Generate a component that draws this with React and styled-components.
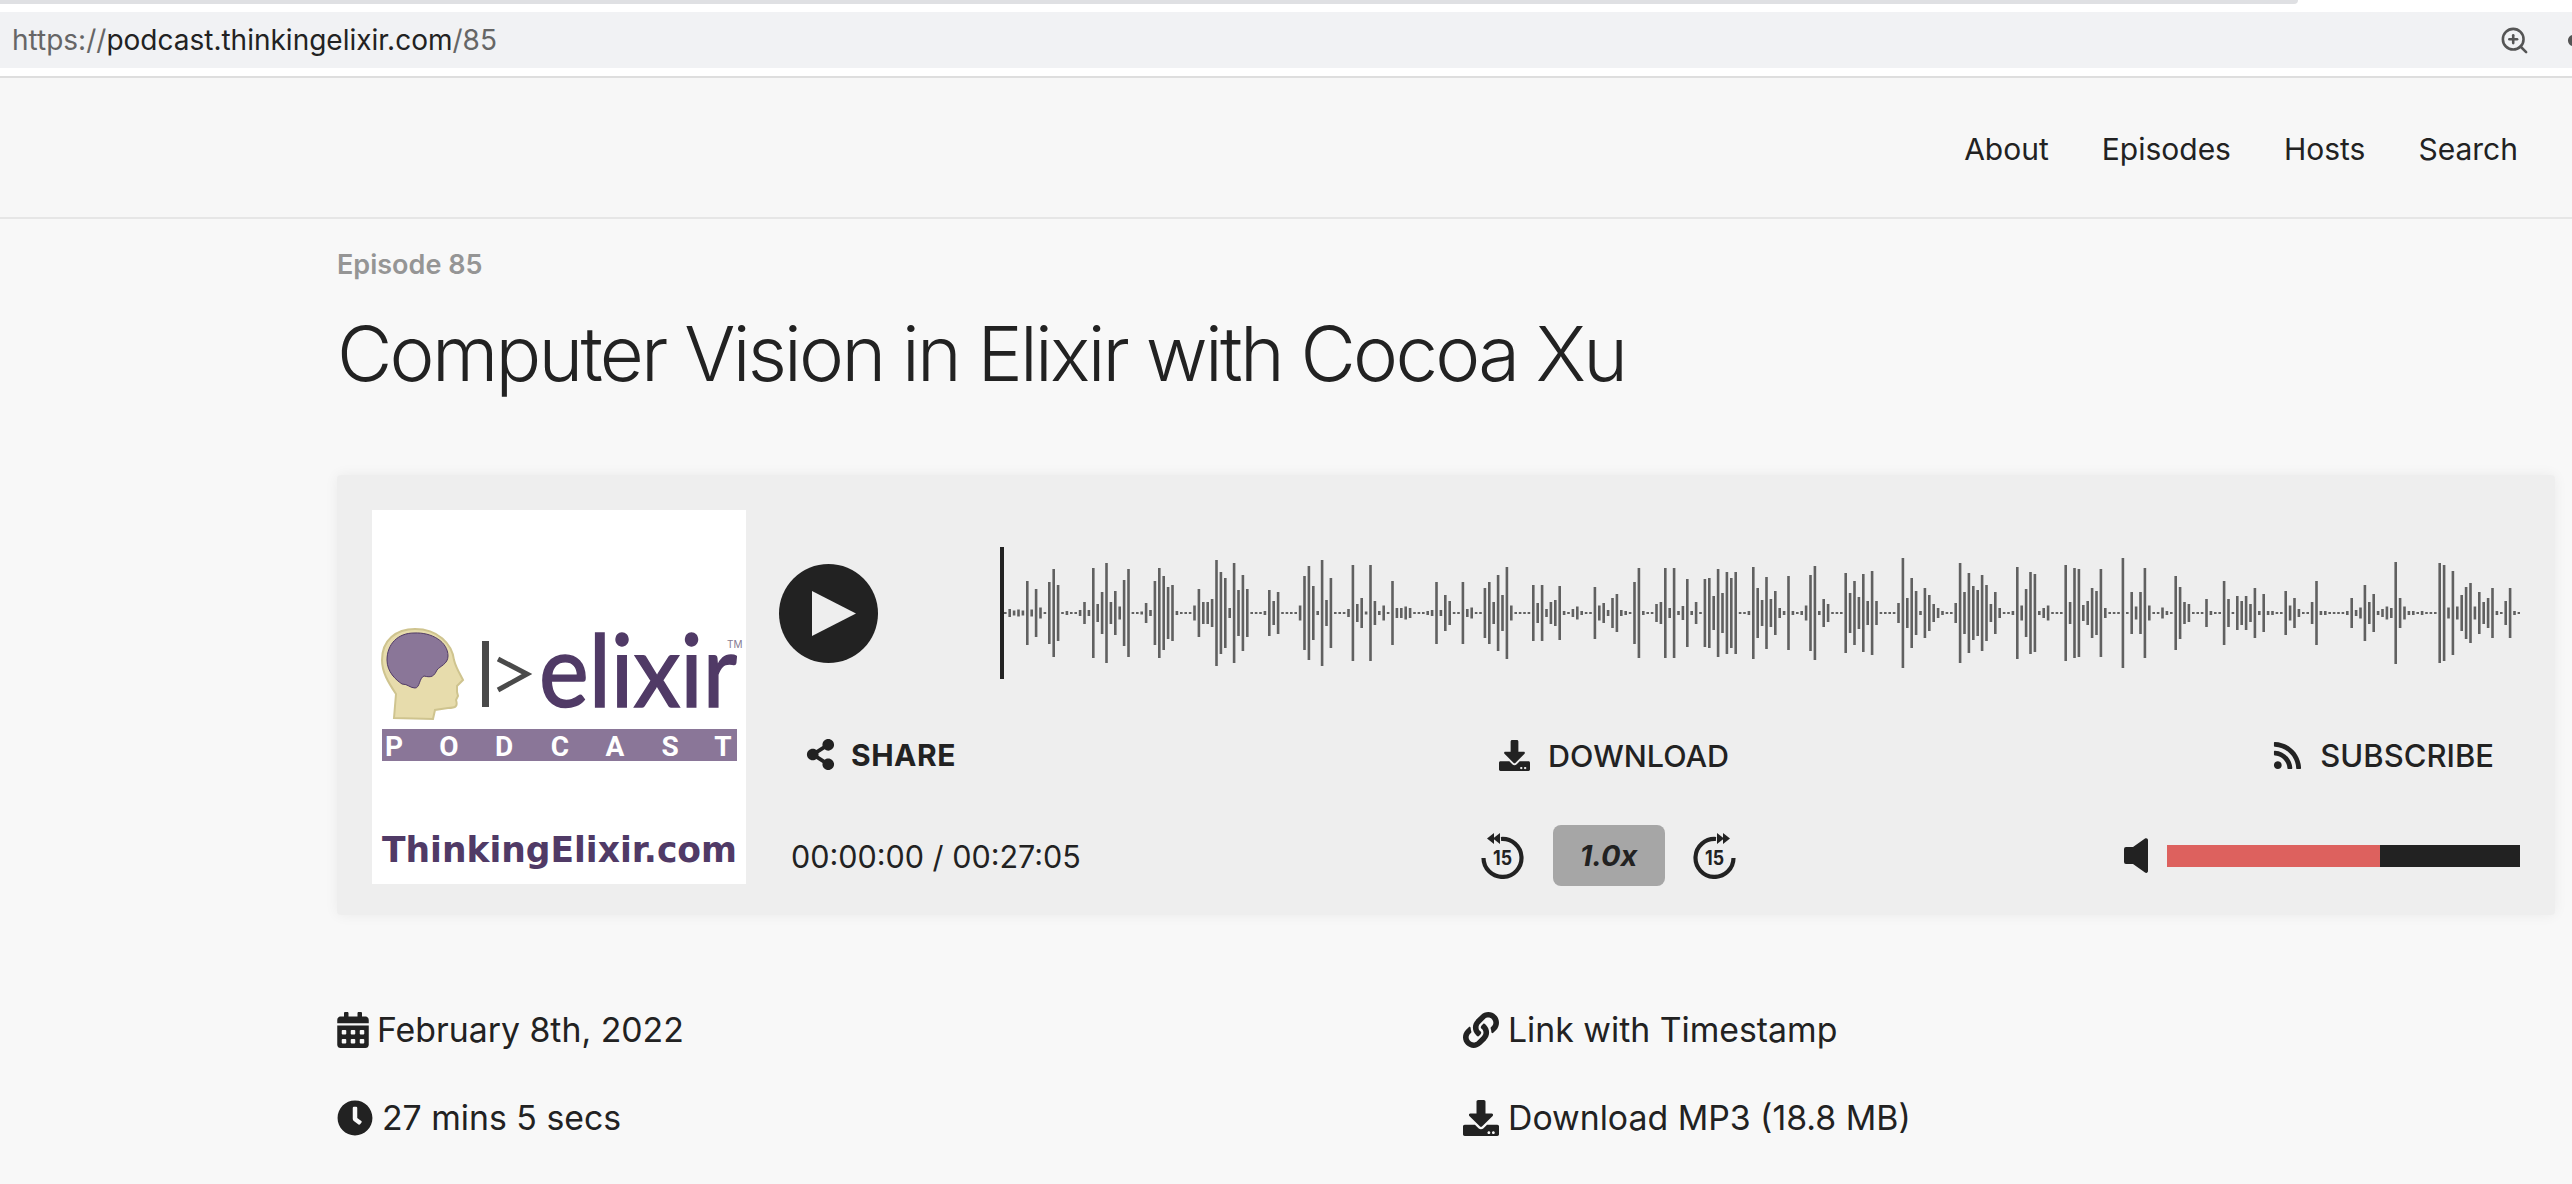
import styled, { createGlobalStyle } from 'styled-components';
import { FaCalendarAlt, FaClock, FaDownload, FaLink, FaRss, FaShareAlt } from 'react-icons/fa';
import { FiZoomIn } from 'react-icons/fi';

// half heights of the wave form bars, left to right, read off the screenshot
const waveBars = [
    1, 4, 2.5, 3.5, 2.5, 32, 3.5, 24, 5.5, 1, 31, 44, 28, 1, 2, 1, 1, 3, 11, 3, 45, 9, 21, 50, 11, 22, 6.5, 33, 44, 1, 1,
    1.5, 10, 3, 32, 45, 37, 26, 28, 2, 1, 1, 1, 7.5, 24, 11, 11, 14, 53, 41, 35, 5, 50, 23, 38, 24, 1, 1, 1, 2, 23, 12,
    21, 1, 1, 1, 1, 7.5, 37, 47, 27, 2, 53, 13, 35, 1, 1, 1, 4, 48, 9,
    15, 1.5, 48, 12, 2, 7.5, 1, 32, 5, 5, 6.5, 5, 1, 1, 1, 2, 3, 31, 3, 18, 12, 1, 1, 31, 4, 5.5, 1, 1, 25, 31, 11, 38,
    18, 46, 7.5, 1, 1, 1, 1, 28, 10, 28, 4, 11, 13, 27, 2, 1, 4, 6.5, 2, 1, 1, 26, 7.5, 10, 3, 15, 19, 3, 2, 1, 31, 45,
    2, 1, 1, 9, 11, 45, 5, 45, 2, 7, 34, 2, 11, 1, 34, 35, 17, 44, 20, 41, 35, 41, 1, 1, 2, 46, 25, 13, 36, 14, 22, 5, 2,
    37, 2, 1, 2, 7.5, 38, 47, 2, 14, 9, 1, 1, 1, 40, 20, 32, 16, 39, 12, 42, 12, 1, 1, 1, 1, 10, 55, 15, 35, 22, 2, 25,
    18, 9, 5, 2, 1, 1, 10, 50,
    21, 40, 27, 23, 38, 28, 9, 21, 5, 1, 1, 2, 46, 7.5, 24, 41, 39, 2, 5, 7.5, 1, 1, 1, 48, 11, 45, 44, 8, 12, 25, 22,
    44, 5, 1, 1, 1, 55, 1, 21, 6.5, 21, 45, 7.5, 1, 1, 5.5, 2, 1, 37, 26, 11, 9, 1, 1, 1, 14, 2, 1, 1, 32, 14, 1, 17, 12,
    17, 9, 25, 2, 19, 2, 2, 1, 1, 22, 7.5, 15, 4, 1, 1, 11, 32, 2, 2, 1, 1, 1, 1, 2, 15, 3, 5.5, 28, 11, 19, 2, 4, 6.5,
    5, 51, 15, 6.5, 2, 2, 1, 2, 1, 1, 1, 50, 48, 5.5, 42, 6.5, 18, 26, 30, 6.5, 21, 11, 15, 25, 2, 1, 12, 25, 2, 1,
];

const BAR_STEP = 4.4;

const GlobalStyle = createGlobalStyle`
    html, body {
        margin: 0;
        height: 1184px;
        overflow: hidden;
        background: #f8f8f8;
        color: #222;
        font-family: Inter, "Liberation Sans", sans-serif;
    }
`;

const BrowserChrome = styled.div`
    background: #fff;
    height: 76px;
    overflow: hidden;
`;
const TabStrip = styled.div`
    width: 2298px;
    height: 4px;
    background: #dfe0e3;
    border-bottom-right-radius: 4px;
    margin-bottom: 8px;
`;
const AddressBar = styled.div`
    height: 56px;
    background: #f1f2f4;
    display: flex;
    align-items: center;
    justify-content: space-between;
    padding-left: 12px;
    font-size: 28px;
    color: #666;
    overflow: hidden;
`;
const Domain = styled.span`
    color: #222;
`;
const AddressIcons = styled.div`
    display: flex;
    align-items: center;
    gap: 36px;
    margin-right: -25px;
    color: #555;
    font-size: 31px;
    svg {
        display: block;
    }
`;
const Header = styled.header`
    height: 139px;
    box-sizing: content-box;
    border-top: 2px solid #dedede;
    border-bottom: 2px solid #e6e6e6;
    background: #f7f7f7;
    display: flex;
    align-items: center;
    justify-content: flex-end;
    gap: 53px;
    padding-right: 54px;
`;
const NavLink = styled.a`
    font-size: 30px;
    color: #222;
    margin-top: 3px;
`;
const Main = styled.main`
    padding: 30px 17px 0 337px;
`;
const EpisodeLabel = styled.div`
    font-size: 27px;
    line-height: 32px;
    font-weight: 600;
    color: #959595;
`;
const Title = styled.h1`
    margin: 26px 0 0;
    font-size: 76px;
    line-height: 92px;
    font-weight: 300;
    letter-spacing: -2.75px;
    color: #222;
`;
const Card = styled.section`
    margin-top: 76px;
    height: 440px;
    box-sizing: border-box;
    padding: 35px 0 0 35px;
    background: #eee;
    box-shadow: 0 0 14px rgba(0, 0, 0, 0.06);
    border-radius: 4px;
    display: flex;
`;
const LogoBox = styled.div`
    width: 374px;
    height: 374px;
    background: #fff;
    flex: none;
`;
const Controls = styled.div`
    flex: 1;
    padding: 37px 36px 0 33px;
`;
const WaveRow = styled.div`
    display: flex;
    align-items: center;
    height: 132px;
`;
const PlayButton = styled.div`
    width: 99px;
    height: 99px;
    border-radius: 50%;
    background: #222;
    display: flex;
    align-items: center;
    justify-content: center;
    padding-left: 10px;
    box-sizing: border-box;
    svg {
        display: block;
    }
`;
const Wave = styled.svg`
    margin-left: 122px;
    display: block;
`;
const ActionRow = styled.div`
    display: flex;
    align-items: center;
    justify-content: space-between;
    margin-top: 60px;
    padding: 0 26px 0 26px;
    height: 31px;
`;
const Action = styled.a`
    display: flex;
    align-items: center;
    gap: ${(p) => p.$gap}px;
    font-size: ${(p) => p.$size}px;
    font-weight: ${(p) => p.$weight};
    letter-spacing: ${(p) => p.$tracking || 0}px;
    color: #222;
    transform: translateY(${(p) => p.$shift || 0}px);
    svg {
        font-size: 31px;
        flex: none;
    }
`;
const TimeRow = styled.div`
    display: grid;
    grid-template-columns: 690px 255px 1fr;
    align-items: center;
    margin-top: 55px;
    padding-left: 12px;
    height: 61px;
`;
const TimeText = styled.div`
    font-size: 30.5px;
    white-space: nowrap;
    margin-top: 2px;
`;
const Speed = styled.div`
    display: flex;
    align-items: center;
    justify-content: space-between;
`;
const SpeedButton = styled.div`
    width: 112px;
    height: 61px;
    border-radius: 8px;
    background: #a6a6a6;
    display: flex;
    align-items: center;
    justify-content: center;
    font-size: 29px;
    font-weight: 700;
    font-style: italic;
`;
const Volume = styled.div`
    display: flex;
    align-items: center;
    justify-content: flex-end;
    gap: 19px;
`;
const VolumeTrack = styled.div`
    width: 353px;
    height: 22px;
    background: #222;
`;
const VolumeFill = styled.div`
    height: 100%;
    background: #dd615e;
`;
const Meta = styled.div`
    display: grid;
    grid-template-columns: 1126px 1fr;
    row-gap: 47px;
    margin-top: 94px;
`;
const MetaItem = styled.div`
    display: flex;
    align-items: center;
    gap: ${(p) => p.$gap}px;
    font-size: 33.8px;
    line-height: 41px;
    svg {
        font-size: 36px;
        flex: none;
        margin-left: ${(p) => p.$iconShift || 0}px;
    }
`;

function SkipIcon({ forward }) {
    return (
        <svg width="43" height="46" viewBox="0 0 43 46">
            <g transform={forward ? 'translate(43 0) scale(-1 1)' : undefined}>
                <path d="M20 6 A19 19 0 1 1 2.5 25" fill="none" stroke="#222" strokeWidth="4.2" />
                <path d="M19 0 L12 5.5 L19 11 Z M13 0 L6 5.5 L13 11 Z" fill="#222" />
            </g>
            <text
                x="21.5"
                y="32"
                textAnchor="middle"
                fontFamily="Inter, sans-serif"
                fontWeight="700"
                fontSize="20"
                fill="#222"
                textLength="19"
                lengthAdjust="spacingAndGlyphs"
            >
                15
            </text>
        </svg>
    );
}

function VolumeIcon() {
    return (
        <svg width="24" height="35" viewBox="0 0 24 35">
            <path
                d="M2 9h7L21 .6c1.5-1 3 0 3 1.5v31c0 1.5-1.5 2.5-3 1.5L9 26H2a2 2 0 0 1-2-2V11a2 2 0 0 1 2-2z"
                fill="#222"
            />
        </svg>
    );
}

function Logo() {
    return (
        <svg width="374" height="374" viewBox="0 0 374 374">
            <path
                d="M22 208 L24 184 C16 172 10 162 10 150 C10 130 24 119 43 119 C66 119 80 134 82 150 C84 158 88 164 91 170 L85 176 L85 182 L86 186 L84 190 C86 196 84 198 76 198 L63 200 L61 209 Z"
                fill="#e7dcac"
                stroke="#cfc48f"
                strokeWidth="2"
            />
            <path
                d="M15 150 C15 134 26 123 42 123 C60 122 76 132 76 146 C76 154 68 156 65 160 C62 166 60 168 52 166 C47 168 48 178 43 178 C38 178 36 174 30 174 C24 170 15 162 15 150 Z"
                fill="#8a7698"
                stroke="#503a66"
                strokeWidth="1"
            />
            <rect x="110" y="131" width="7" height="66" fill="#4a4a4a" />
            <path d="M126 149 L155 164 L126 180" fill="none" stroke="#4a4a4a" strokeWidth="5" />
            <text
                x="167"
                y="197"
                fontFamily="Lato, sans-serif"
                fontWeight="400"
                fontSize="100"
                fill="#503a66"
                stroke="#503a66"
                strokeWidth="1.6"
                textLength="198"
                lengthAdjust="spacingAndGlyphs"
            >
                elixir
            </text>
            <text x="355" y="138" fontFamily="Inter, sans-serif" fontSize="10" fill="#857a92">
                TM
            </text>
            <rect x="10" y="219" width="355" height="32" fill="#8a7698" />
            <text
                x="22 77 132 188 243 298 351"
                y="246"
                textAnchor="middle"
                fontFamily="Roboto, sans-serif"
                fontWeight="700"
                fontSize="28"
                fill="#fff"
            >
                PODCAST
            </text>
            <text
                x="10"
                y="352"
                fontFamily="DejaVu Sans, sans-serif"
                fontWeight="700"
                fontSize="35"
                fill="#503a66"
                textLength="355"
                lengthAdjust="spacingAndGlyphs"
            >
                ThinkingElixir.com
            </text>
        </svg>
    );
}

function App() {
    return (
        <>
            <GlobalStyle />
            <BrowserChrome>
                <TabStrip />
                <AddressBar>
                    <span>
                        https://<Domain>podcast.thinkingelixir.com</Domain>/85
                    </span>
                    <AddressIcons>
                        <FiZoomIn />
                        <FaShareAlt />
                    </AddressIcons>
                </AddressBar>
            </BrowserChrome>
            <Header>
                <NavLink>About</NavLink>
                <NavLink>Episodes</NavLink>
                <NavLink>Hosts</NavLink>
                <NavLink>Search</NavLink>
            </Header>
            <Main>
                <EpisodeLabel>Episode 85</EpisodeLabel>
                <Title>Computer Vision in Elixir with Cocoa Xu</Title>
                <Card>
                    <LogoBox>
                        <Logo />
                    </LogoBox>
                    <Controls>
                        <WaveRow>
                            <PlayButton>
                                <svg width="44" height="45" viewBox="0 0 44 45">
                                    <path d="M0 0 L44 22.5 L0 45 Z" fill="#eee" />
                                </svg>
                            </PlayButton>
                            <Wave width="1520" height="132" viewBox="0 0 1520 132">
                                <rect x="0" y="0" width="4" height="132" fill="#222" />
                                {waveBars.map((h, i) => (
                                    <rect
                                        key={i}
                                        x={4 + i * BAR_STEP}
                                        y={66 - h}
                                        width="2.6"
                                        height={h * 2}
                                        fill="#606060"
                                    />
                                ))}
                            </Wave>
                        </WaveRow>
                        <ActionRow>
                            <Action $gap={15} $weight={700} $size={30} $tracking={0.5}>
                                <FaShareAlt />
                                SHARE
                            </Action>
                            <Action $gap={18} $weight={500} $size={30.5} $shift={1}>
                                <FaDownload />
                                DOWNLOAD
                            </Action>
                            <Action $gap={17} $weight={500} $size={31} $shift={1}>
                                <FaRss />
                                SUBSCRIBE
                            </Action>
                        </ActionRow>
                        <TimeRow>
                            <TimeText>00:00:00 / 00:27:05</TimeText>
                            <Speed>
                                <SkipIcon />
                                <SpeedButton>1.0x</SpeedButton>
                                <SkipIcon forward />
                            </Speed>
                            <Volume>
                                <VolumeIcon />
                                <VolumeTrack>
                                    <VolumeFill style={{ width: '60.2%' }} />
                                </VolumeTrack>
                            </Volume>
                        </TimeRow>
                    </Controls>
                </Card>
                <Meta>
                    <MetaItem $gap={6} $iconShift={-2}>
                        <FaCalendarAlt />
                        February 8th, 2022
                    </MetaItem>
                    <MetaItem $gap={9}>
                        <FaLink />
                        Link with Timestamp
                    </MetaItem>
                    <MetaItem $gap={9}>
                        <FaClock />
                        27 mins 5 secs
                    </MetaItem>
                    <MetaItem $gap={9}>
                        <FaDownload />
                        Download MP3 (18.8 MB)
                    </MetaItem>
                </Meta>
            </Main>
        </>
    );
}

export default App;
